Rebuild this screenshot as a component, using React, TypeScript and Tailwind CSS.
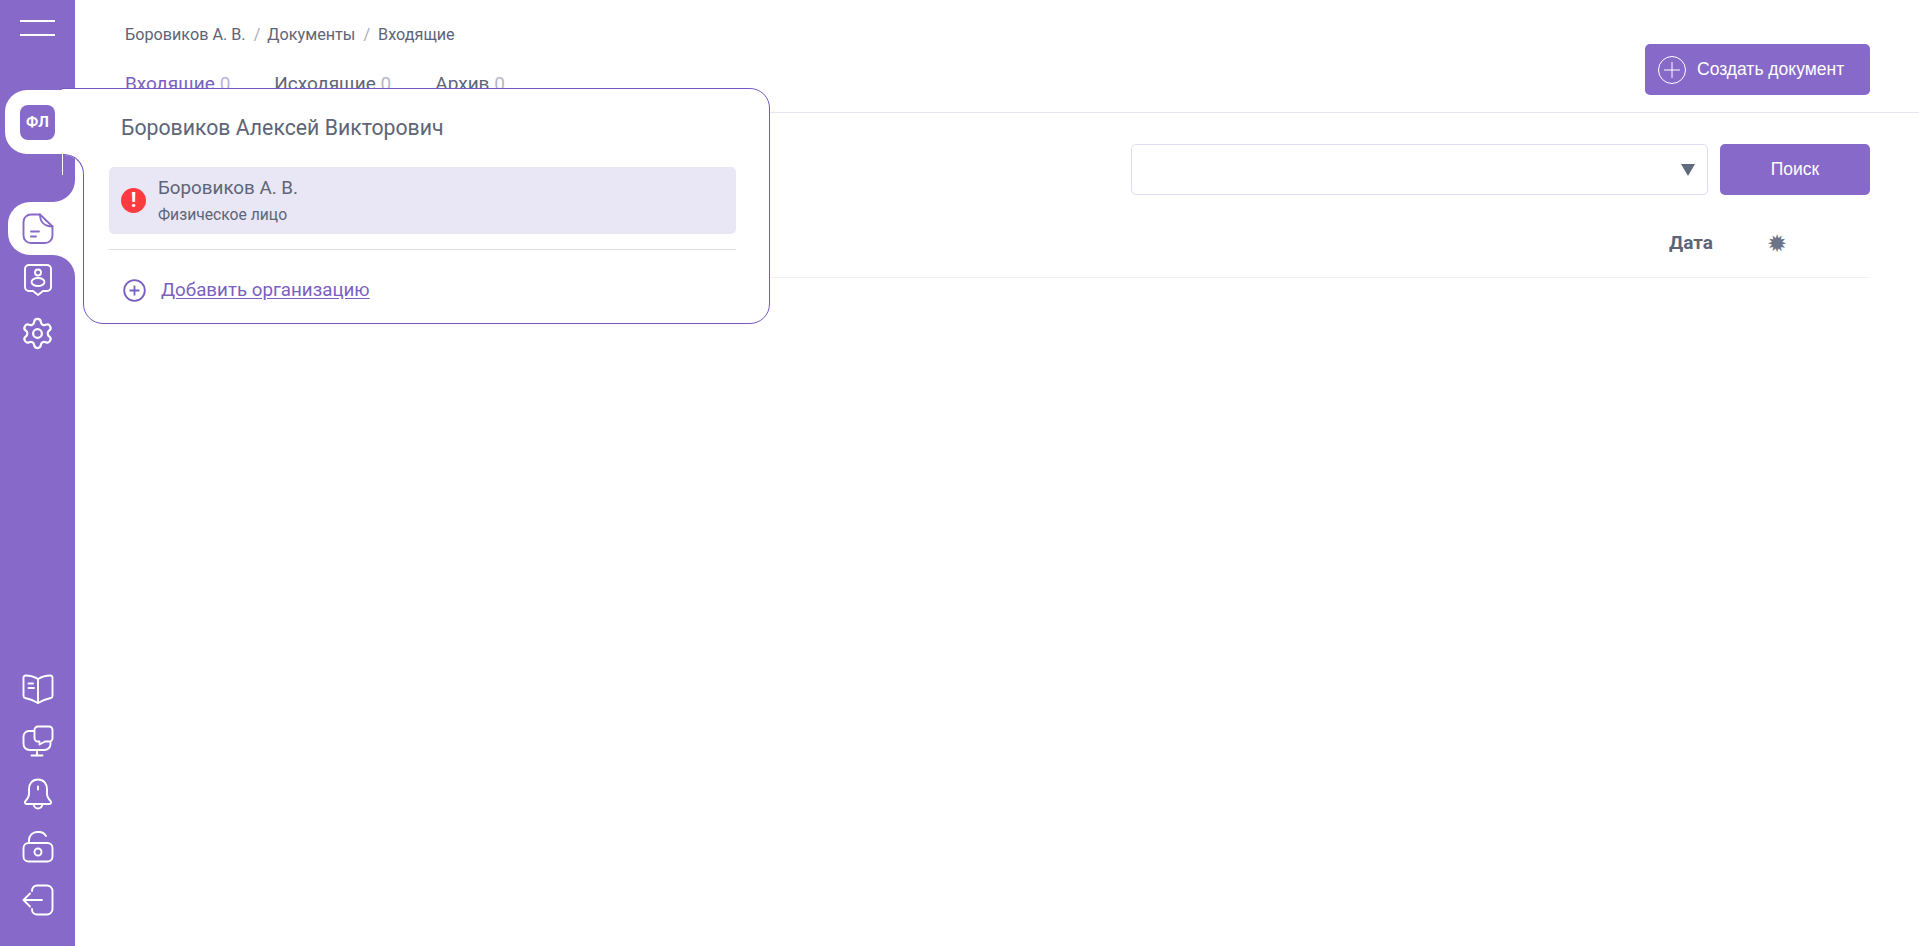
import { Settings } from "lucide-react";

const PURPLE = "#8669c8";

function DocIcon() {
  return (
    <svg width="32" height="32" viewBox="0 0 32 32" fill="none" stroke={PURPLE} strokeWidth="1.9" strokeLinecap="round" strokeLinejoin="round">
      <path d="M18 1.5H9A7.5 7.5 0 0 0 1.5 9v13.5A7.5 7.5 0 0 0 9 30h14a7.5 7.5 0 0 0 7.5-7.5V13.5Z" />
      <path d="M18 1.5c0 7 4 12 12.5 12" />
      <path d="M9 18.5h8M9 23.5h5" />
    </svg>
  );
}

function PersonIcon() {
  return (
    <svg width="28" height="32" viewBox="0 0 28 32" fill="none" stroke="#fff" strokeWidth="1.9" strokeLinecap="round" strokeLinejoin="round">
      <path d="M5 1h18a4 4 0 0 1 4 4v18a4 4 0 0 1-4 4h-4l-5 4-5-4H5a4 4 0 0 1-4-4V5a4 4 0 0 1 4-4Z" />
      <circle cx="14" cy="8.5" r="3" />
      <ellipse cx="14" cy="18" rx="6.5" ry="4" />
    </svg>
  );
}

function BookIcon() {
  return (
    <svg width="32" height="30" viewBox="0 0 32 30" fill="none" stroke="#fff" strokeWidth="1.9" strokeLinecap="round" strokeLinejoin="round">
      <path d="M16 5C12 2.5 7 1.500 3.500 1.500A2 2 0 0 0 1.500 3.500V22a2 2 0 0 0 1.700 2C8 25 12 26.500 16 29c4-2.500 8-4 12.800-5a2 2 0 0 0 1.700-2V3.500a2 2 0 0 0-2-2C25 1.500 20 2.500 16 5Z" />
      <path d="M16 5v24" />
      <path d="M6.500 9.500h4.500M6.500 14h5.500" />
    </svg>
  );
}

function MonitorIcon() {
  return (
    <svg width="32" height="32" viewBox="0 0 32 32" fill="none" stroke="#fff" strokeWidth="1.9" strokeLinecap="round" strokeLinejoin="round">
      <path d="M12 6H7a5.500 5.500 0 0 0-5.500 5.500V19A6 6 0 0 0 7.500 25h15a6 6 0 0 0 6-6v-2" />
      <path d="M16 1.500h11a3.500 3.500 0 0 1 3.500 3.500v8a3.500 3.500 0 0 1-3.500 3.500h-4l-5.500 3v-3h-1.500a3.500 3.500 0 0 1-3.500-3.500V5a3.500 3.500 0 0 1 3.500-3.500Z" />
      <path d="M15 25v5M9.500 30.500h11" />
    </svg>
  );
}

function BellIcon() {
  return (
    <svg width="30" height="32" viewBox="0 0 30 32" fill="none" stroke="#fff" strokeWidth="1.9" strokeLinecap="round" strokeLinejoin="round">
      <path d="M15 1.500C9 1.500 6 6 6 11v5c0 3-1.500 5-3.500 7-1.300 1.300-.5 3 1 3h23c1.500 0 2.300-1.700 1-3-2-2-3.500-4-3.500-7v-5c0-5-3-9.500-9-9.500Z" />
      <path d="M10.500 26.500c.8 2.500 2.500 4 4.500 4s3.700-1.500 4.500-4" />
      <path d="M15 8.500v3" />
    </svg>
  );
}

function LockIcon() {
  return (
    <svg width="32" height="32" viewBox="0 0 32 32" fill="none" stroke="#fff" strokeWidth="1.9" strokeLinecap="round" strokeLinejoin="round">
      <path d="M7 12V9a8 8 0 0 1 8-8h2a8 8 0 0 1 7 4" />
      <rect x="1.500" y="12" width="29" height="18.500" rx="5" />
      <circle cx="16" cy="21" r="3.500" />
    </svg>
  );
}

function ExitIcon() {
  return (
    <svg width="32" height="32" viewBox="0 0 32 32" fill="none" stroke="#fff" strokeWidth="1.9" strokeLinecap="round" strokeLinejoin="round">
      <path d="M10 7V6.500A5 5 0 0 1 15 1.500h10a5.500 5.500 0 0 1 5.500 5.500v18a5.500 5.500 0 0 1-5.500 5.500H15a5 5 0 0 1-5-5V25" />
      <path d="M20 16H2M8 9.500 1.500 16 8 22.500" />
    </svg>
  );
}

function Sidebar() {
  return (
    <aside className="flex h-full w-[75px] shrink-0 flex-col">
      <div className="h-[202px] shrink-0 rounded-br-[22px] bg-[#8669c8] pt-5">
        <button className="mx-auto flex w-[35px] flex-col gap-[12px]" aria-label="Меню">
          <span className="h-[2px] bg-white" />
          <span className="h-[2px] bg-white" />
        </button>
      </div>
      <div className="h-[53px] shrink-0 bg-[#8669c8] pl-[8px]">
        <div className="flex h-full items-center rounded-l-[22px] bg-white pl-[14px]">
          <DocIcon />
        </div>
      </div>
      <nav className="flex flex-1 flex-col items-center rounded-tr-[22px] bg-[#8669c8] pt-[9px] pb-[30px] text-white">
        <PersonIcon />
        <Settings className="mt-[20px] size-[35px]" strokeWidth={1.5} />
        <div className="mt-auto flex flex-col items-center gap-[21px]">
          <BookIcon />
          <MonitorIcon />
          <BellIcon />
          <LockIcon />
          <ExitIcon />
        </div>
      </nav>
    </aside>
  );
}

function AccountPopup() {
  return (
    <>
      <div className="absolute top-[88px] left-[83px] z-10 h-[236px] w-[687px] rounded-[20px] rounded-tl-none border border-[#7558c0] bg-white pt-[22px] pr-[33px] pl-[25px]">
        <p className="pl-[12px] text-[21.25px] leading-[33px] text-[#5d6577]">Боровиков Алексей Викторович</p>
        <div className="mt-[23px] flex h-[67px] items-center rounded-[5px] bg-[#e9e6f5] pl-[12px]">
          <span className="flex size-[25px] items-center justify-center rounded-full bg-[#ff3b40] text-[21px] leading-none font-bold text-white">!</span>
          <div className="ml-[12px] -mt-px">
            <p className="text-[18.8px] leading-[24px] text-[#5d6577]">Боровиков А. В.</p>
            <p className="mt-[5px] text-[15.7px] leading-[20px] text-[#5d6577]">Физическое лицо</p>
          </div>
        </div>
        <div className="mt-[15px] border-t border-[#dcd9ea]" />
        <a className="mt-[28px] flex items-center pl-[14px] text-[18.75px] leading-[24px] text-[#7a5fc0]" href="#">
          <svg width="23" height="23" viewBox="0 0 23 23" fill="none" stroke="#7a5fc0" strokeWidth="1.8">
            <circle cx="11.500" cy="11.500" r="10.300" />
            <path d="M11.500 6.500v10M6.500 11.500h10" />
          </svg>
          <span className="ml-[15px] underline underline-offset-2">Добавить организацию</span>
        </a>
      </div>
      {/* tab that joins the popup to the sidebar */}
      <div className="absolute top-[88px] left-[62px] z-20 h-[66px] w-[22px] border-t border-[#7558c0] bg-white" />
      <div className="absolute top-[90px] left-[5px] z-20 flex h-[64px] w-[60px] items-center rounded-l-[22px] bg-white pl-[15px]">
        <span className="flex size-[35px] items-center justify-center rounded-[8px] bg-[#8669c8] text-[15px] font-bold text-white">ФЛ</span>
      </div>
      <div className="absolute top-[154px] left-[62px] z-20 h-[21px] w-[22px] bg-white pl-px">
        <div className="h-full w-full overflow-hidden rounded-tr-[20px] border-t border-r border-[#7558c0]">
          <div className="h-full w-[12px] bg-[#8669c8]" />
        </div>
      </div>
    </>
  );
}

export default function App() {
  return (
    <div className="relative flex h-screen overflow-hidden bg-white font-['Roboto',sans-serif] text-[#5d6577]">
      <Sidebar />
      <main className="min-w-0 flex-1">
        <header className="flex h-[113px] justify-between border-b border-[#e8e6f3] pr-[49px] pl-[50px]">
          <div className="pt-[25px]">
            <div className="flex text-[16.2px] leading-[20px]">
              <span>Боровиков А. В.</span>
              <span className="mr-[7px] ml-[8px] text-[#a9adb9]">/</span>
              <span>Документы</span>
              <span className="mx-[8px] text-[#a9adb9]">/</span>
              <span>Входящие</span>
            </div>
            <div className="mt-[27px] flex gap-[44px] text-[19px] leading-[24px]">
              <span className="text-[#7a5fc0]">Входящие <span className="text-[#b9b2dc]">0</span></span>
              <span>Исходящие <span className="text-[#b4b8c2]">0</span></span>
              <span>Архив <span className="text-[#b4b8c2]">0</span></span>
            </div>
          </div>
          <button className="mt-[44px] flex h-[51px] w-[225px] items-center rounded-[5px] bg-[#8669c8] pl-[13px] font-['Liberation_Sans',sans-serif] text-[17.5px] text-white">
            <svg width="28" height="28" viewBox="0 0 28 28" fill="none" stroke="#fff" strokeWidth="1">
              <circle cx="14" cy="14" r="13.500" />
              <path d="M14 6v16M6 14h16" />
            </svg>
            <span className="ml-[11px]">Создать документ</span>
          </button>
        </header>
        <div className="mt-[31px] flex justify-end gap-[12px] pr-[49px]">
          <div className="flex h-[51px] w-[577px] items-center justify-end rounded-[5px] border border-[#e0daf2] pr-[12px]">
            <svg width="14" height="12" viewBox="0 0 14 12" fill="#5f6b7c">
              <path d="M0 0h14L7 12Z" />
            </svg>
          </div>
          <button className="h-[51px] w-[150px] rounded-[5px] bg-[#8669c8] font-['Liberation_Sans',sans-serif] text-[17.5px] text-white">Поиск</button>
        </div>
        <div className="mr-[49px] ml-[50px] flex h-[83px] items-center justify-end border-b border-[#f0eff7] pt-[15px] pr-[83px]">
          <span className="text-[19px] font-bold">Дата</span>
          <span className="ml-[54px] text-[24px] leading-none text-[#6b7488]">✹</span>
        </div>
      </main>
      <AccountPopup />
    </div>
  );
}
